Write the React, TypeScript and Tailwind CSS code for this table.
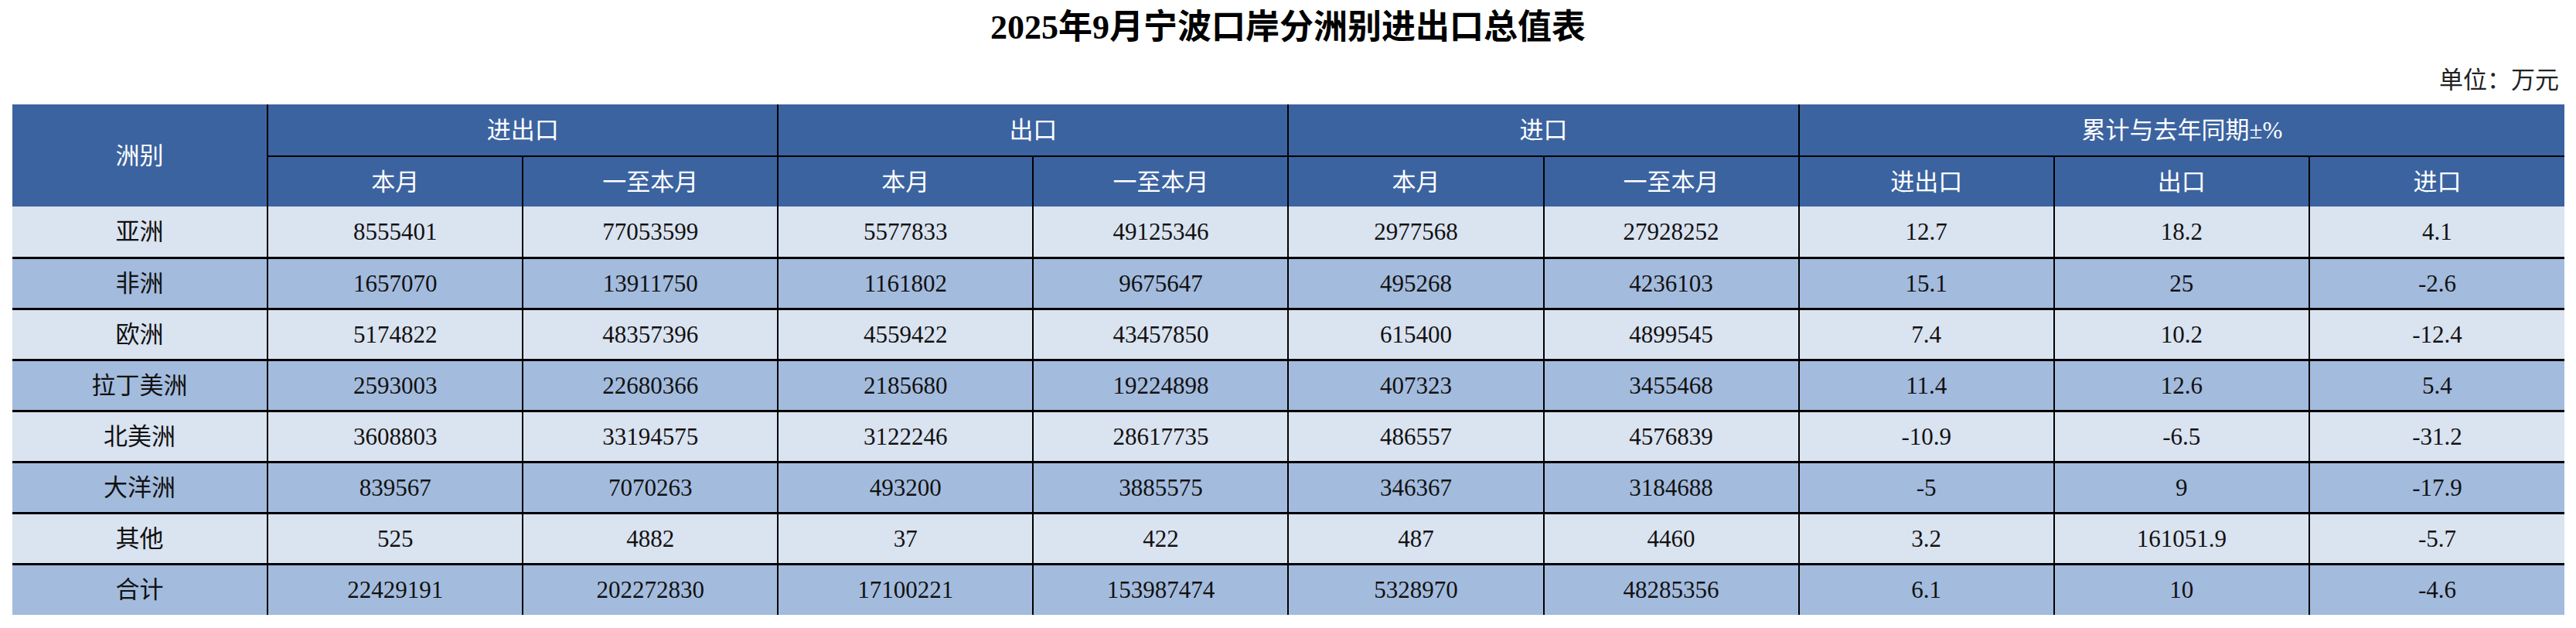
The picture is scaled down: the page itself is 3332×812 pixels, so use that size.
const FONT = "font-['Liberation_Serif','Noto_Sans_CJK_SC',serif]";

type Row = {
  name: string;
  values: string[];
};

const ROWS: Row[] = [
  { name: "亚洲", values: ["8555401", "77053599", "5577833", "49125346", "2977568", "27928252", "12.7", "18.2", "4.1"] },
  { name: "非洲", values: ["1657070", "13911750", "1161802", "9675647", "495268", "4236103", "15.1", "25", "-2.6"] },
  { name: "欧洲", values: ["5174822", "48357396", "4559422", "43457850", "615400", "4899545", "7.4", "10.2", "-12.4"] },
  { name: "拉丁美洲", values: ["2593003", "22680366", "2185680", "19224898", "407323", "3455468", "11.4", "12.6", "5.4"] },
  { name: "北美洲", values: ["3608803", "33194575", "3122246", "28617735", "486557", "4576839", "-10.9", "-6.5", "-31.2"] },
  { name: "大洋洲", values: ["839567", "7070263", "493200", "3885575", "346367", "3184688", "-5", "9", "-17.9"] },
  { name: "其他", values: ["525", "4882", "37", "422", "487", "4460", "3.2", "161051.9", "-5.7"] },
  { name: "合计", values: ["22429191", "202272830", "17100221", "153987474", "5328970", "48285356", "6.1", "10", "-4.6"] },
];

const GROUPS = [
  { label: "进出口", span: 2 },
  { label: "出口", span: 2 },
  { label: "进口", span: 2 },
  { label: "累计与去年同期±%", span: 3 },
];

const SUBHEADS = ["本月", "一至本月", "本月", "一至本月", "本月", "一至本月", "进出口", "出口", "进口"];

export default function App() {
  return (
    <div className={`w-[3332px] h-[812px] bg-white text-[#111] ${FONT}`}>
      {/* title */}
      <div className="flex h-[72px] items-center justify-center">
        <h1 className="text-[44px] font-bold leading-none text-black">2025年9月宁波口岸分洲别进出口总值表</h1>
      </div>
      {/* unit */}
      <div className="flex h-[63px] items-center justify-end pr-[22px]">
        <span className="text-[31px] leading-none text-[#222]">单位：万元</span>
      </div>

      <div className="pl-[16px]">
        <table className="w-[3301px] table-fixed border-collapse text-center text-[31px] leading-none">
          <colgroup>
            {Array.from({ length: 10 }).map((_, i) => (
              <col key={i} className="w-[330px]" />
            ))}
          </colgroup>
          <thead className="bg-[#3b63a0] text-white">
            <tr className="h-[67px]">
              <th rowSpan={2} className="border-r-2 border-black font-normal">洲别</th>
              {GROUPS.map((g, i) => (
                <th
                  key={g.label}
                  colSpan={g.span}
                  className={`border-b-2 border-black font-normal ${i < GROUPS.length - 1 ? "border-r-2" : ""}`}
                >
                  {g.label}
                </th>
              ))}
            </tr>
            <tr className="h-[65px]">
              {SUBHEADS.map((s, i) => (
                <th key={i} className={`border-black font-normal ${i < SUBHEADS.length - 1 ? "border-r-2" : ""}`}>
                  {s}
                </th>
              ))}
            </tr>
          </thead>
          <tbody>
            {ROWS.map((row, r) => (
              <tr
                key={row.name}
                className={`h-[66px] ${r % 2 === 0 ? "bg-[#dae3f0]" : "bg-[#a3bbdd]"} ${r > 0 ? "border-t-[3px] border-black" : ""}`}
              >
                <td className="border-r-2 border-black">{row.name}</td>
                {row.values.map((v, i) => (
                  <td key={i} className={`border-black ${i < row.values.length - 1 ? "border-r-2" : ""}`}>
                    {v}
                  </td>
                ))}
              </tr>
            ))}
          </tbody>
        </table>
      </div>
    </div>
  );
}
